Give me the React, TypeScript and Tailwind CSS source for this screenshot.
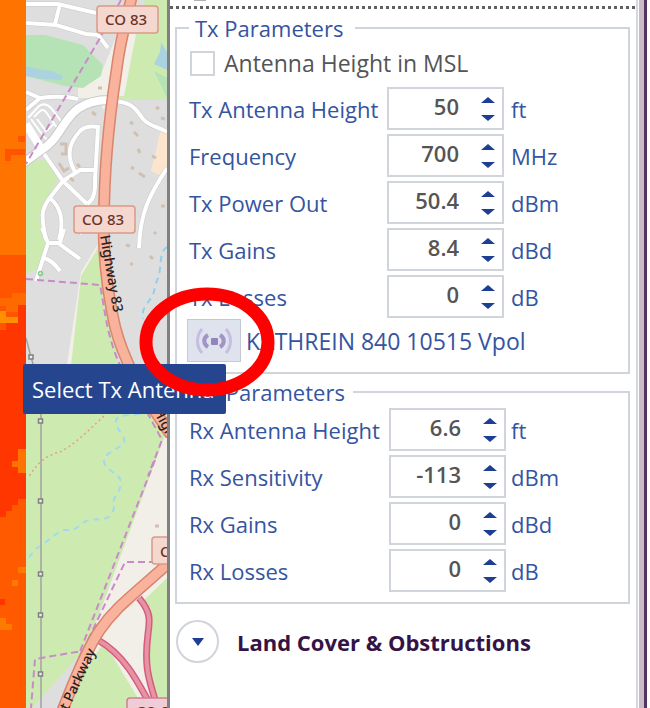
import React from 'react';
import clsx from 'clsx';

type Param = { id: string; label: string; value: string; unit: string };

const txParams: Param[] = [
  { id: 'tx-height', label: 'Tx Antenna Height', value: '50', unit: 'ft' },
  { id: 'tx-frequency', label: 'Frequency', value: '700', unit: 'MHz' },
  { id: 'tx-power', label: 'Tx Power Out', value: '50.4', unit: 'dBm' },
  { id: 'tx-gains', label: 'Tx Gains', value: '8.4', unit: 'dBd' },
  { id: 'tx-losses', label: 'Tx Losses', value: '0', unit: 'dB' },
];

const rxParams: Param[] = [
  { id: 'rx-height', label: 'Rx Antenna Height', value: '6.6', unit: 'ft' },
  { id: 'rx-sensitivity', label: 'Rx Sensitivity', value: '-113', unit: 'dBm' },
  { id: 'rx-gains', label: 'Rx Gains', value: '0', unit: 'dBd' },
  { id: 'rx-losses', label: 'Rx Losses', value: '0', unit: 'dB' },
];

function ParamRow({ id, label, value, unit, wide }: Param & { wide?: boolean }) {
  return (
    <div className="flex h-[43px] items-center">
      <label htmlFor={id} className={clsx('shrink-0 whitespace-nowrap', wide ? 'w-[200px]' : 'w-[198px]')}>
        {label}
      </label>
      <div className="flex h-full w-[117px] shrink-0 items-center border-2 border-[#d0d4db] bg-white">
        <input
          id={id}
          type="text"
          inputMode="decimal"
          defaultValue={value}
          className="h-full w-[70px] bg-transparent pb-[6px] text-right font-semibold text-[#555] outline-none"
        />
        <div className="ml-[22px] flex flex-col gap-3">
          <button type="button" aria-label={`Increase ${label}`} className="block">
            <svg className="block h-[6px] w-[14px]" viewBox="0 0 14 6"><path d="M7 0 14 6H0z" fill="#1c3f94" /></svg>
          </button>
          <button type="button" aria-label={`Decrease ${label}`} className="block">
            <svg className="block h-[6px] w-[14px]" viewBox="0 0 14 6"><path d="M0 0H14L7 6z" fill="#1c3f94" /></svg>
          </button>
        </div>
      </div>
      <span className={wide ? 'ml-[5px]' : 'ml-[7px]'}>{unit}</span>
    </div>
  );
}

function AntennaIcon() {
  return (
    <svg className="h-[26px] w-9" viewBox="0 0 36 26" fill="none">
      <rect x="15" y="10" width="7" height="7" rx="1" fill="#9583bd" />
      <path d="M12 7C7 10 7 16 12 19M24 7c5 3 5 9 0 12" stroke="#a294c6" strokeWidth="4" />
      <path d="M6 1C0 8 0 18 6 25M30 1c6 7 6 17 0 24" stroke="#c9bce2" strokeWidth="3" />
    </svg>
  );
}

function MapView() {
  return (
    <svg
      className="h-full w-[167px] shrink-0"
      viewBox="0 0 167 708"
      preserveAspectRatio="xMinYMin slice"
      role="img"
      aria-label="Coverage map"
      fill="none"
      fontFamily="'Noto Sans', 'Open Sans', sans-serif"
    >
      <rect width="167" height="708" fill="#dedede" />

      {/* land use */}
      <path d="M145 0h22v100h-48l7-30z" fill="#cdebb0" />
      <path d="M119 30l17 4-12 62h-16l-4 14-8-12H78V88l22-12z" fill="#f2efe9" />
      <path d="M26 35l19 0 38 10 20 20-2 11-18 12-18-2-39-10z" fill="#b5e3b5" />
      <path d="M26 66l12 3 14 2 11 5-2 4-18-1-17-3z" fill="#aad3df" />
      <path d="M161 42l6 10v18l-13-6 6-12z" fill="#aad3df" />
      <path d="M154 71l13 7v20z" fill="#b5e3b5" />
      <path d="M26 163l20-4 12 21-16 26 6 34-12 30-10 4z" fill="#cdebb0" />
      <path d="M167 128l-7 4-4 19-5 20 8 4 8-9z" fill="#fbe6cd" />
      <path d="M98 244L71 364h-4l14-92z" fill="#f2efe9" />
      <path d="M98 248l9 60 12 58H71l10-90z" fill="#cdebb0" />
      <path d="M26 400h117l24 40-83 210-52 58h-6z" fill="#cdebb0" />
      <path d="M167 430v278H58l28-58z" fill="#f2efe9" />
      <path d="M60 708l44-66 40 66z" fill="#cdebb0" />
      <path d="M167 578l-26 25 7 20-2 40 12 45h9z" fill="#cdebb0" />

      {/* residential streets */}
      <g stroke="#c8c8c8" strokeWidth="5">
        <path d="M26 4l32 0 38 9M60 4l-5 20M26 23l30 2 30 9 12 1 10 13" />
        <path d="M26 92l14 6-14 12M40 98q22-3 38 1" />
        <path d="M110 101c22 0 26 8 33 18 6 7 15 8 24 13" />
        <path d="M42 151l21 30-14 18c-8 11-8 18-3 41M63 181l24 23M63 181l17-11 14 0M87 204q9-5 8-24l3-53q-12-2-18 4c-14 15-12 28-5 41M50 198c12 10 14 24 9 42" />
        <path d="M167 168c-17 26-27 44-28 80" />
        <path d="M42 228l6 15 10 0 22 16M60 243l4-14M48 243l-12 38M44 258q8 2 16 13M82 234l-6-10" />
      </g>
      <g stroke="#fff" strokeWidth="4">
        <path d="M26 4l32 0 38 9M60 4l-5 20M26 23l30 2 30 9 12 1 10 13" />
        <path d="M26 92l14 6-14 12M40 98q22-3 38 1" />
        <path d="M110 101c22 0 26 8 33 18 6 7 15 8 24 13" />
        <path d="M42 151l21 30-14 18c-8 11-8 18-3 41M63 181l24 23M63 181l17-11 14 0M87 204q9-5 8-24l3-53q-12-2-18 4c-14 15-12 28-5 41M50 198c12 10 14 24 9 42" />
        <path d="M167 168c-17 26-27 44-28 80" />
        <path d="M42 228l6 15 10 0 22 16M60 243l4-14M48 243l-12 38M44 258q8 2 16 13M82 234l-6-10" />
      </g>
      <path d="M28 118l11-12q6-4 12 2l13 17M31 119l13 18q4 5 9 1l7-6-14-20q-3-4-7 0l-5 5M37 119l9 12 8-7" stroke="#fff" strokeWidth="2" />
      <path d="M22 164l18-13c28-16 22-51 70-51" stroke="#c8c8c8" strokeWidth="10" />
      <path d="M22 164l18-13c28-16 22-51 70-51M26 124l16 26" stroke="#fff" strokeWidth="8" />

      {/* buildings */}
      <g stroke="#cfc0b2" strokeWidth="3">
        <path d="M60 144h6v10h-5M59 163l5 8 5-3M70 178l4 3M77 164l3 3M92 112l4 3M98 88h4M130 122l3 2M134 132l4 4M138 149l2 4M131 167l3 2M139 173l6 4M152 156l4 2M156 107l3 2M161 118l4 1M161 206h4M154 232l2 2M126 245l4 1M150 256l3 3M130 264h3M155 526h4" />
      </g>

      {/* streams */}
      <path d="M167 247c-10 6-3 22-12 38 0 12-8 16-12 26v8" stroke="#8fd0ea" strokeWidth="2" strokeDasharray="6 5" />
      <path d="M140 414c-14 2-24 0-24 8s10 14 8 20-20 10-20 19 16 12 17 21-11 16-7 26c-4 18-22 7-31 15s-11 7-20 7c-12 6-17 14-26 18-5 5-8 10-11 12" stroke="#a3d8f0" strokeWidth="2" strokeDasharray="6 5" />

      {/* power line */}
      <path d="M26 338l5 19 10 34v317" stroke="#a2a2a2" strokeWidth="1.500" />
      <g fill="#eee" stroke="#808080" strokeWidth="1.500">
        <path d="M29 355h4v4h-4zM38.500 419h4v4h-4zM38.500 499h4v4h-4zM38.500 572h4v4h-4zM38.500 613h4v4h-4zM38.500 672h4v4h-4z" />
      </g>
      <circle cx="40.500" cy="273.500" r="2" stroke="#7fcf8a" strokeWidth="1.500" />
      <path d="M104 416c-16 15-30 29-44 36-16 4-23 12-32 26" stroke="#ee9c80" strokeWidth="1.500" strokeDasharray="2 3" />

      {/* boundaries */}
      <g stroke="#c98bc8" strokeWidth="2" strokeDasharray="7 4">
        <path d="M121 0l-21 38-74 126" />
        <path d="M26 279l74 6c4 18 6 50 20 80M147 412l15 28-14 36M155 460L79 654M167 562h-42L88 640" />
        <path d="M58 708l24-57-47 8-4 49" />
      </g>

      {/* slip roads */}
      <g stroke="#d35d80" strokeWidth="7">
        <path d="M139 598c12 14 11 22 9 36-5 40 4 50 9 74M98 640c25 14 38 38 54 68" />
      </g>
      <g stroke="#e892a2" strokeWidth="4">
        <path d="M139 598c12 14 11 22 9 36-5 40 4 50 9 74M98 640c25 14 38 38 54 68" />
      </g>

      {/* highway */}
      <g stroke="#d9846c" strokeWidth="12">
        <path d="M132-4c-6 24-12 44-16 78-7 46-12 90-12 146-1 30 2 62 9 97 5 28 14 42 20 58 10 20 22 36 38 60" />
        <path d="M172 560c-66 60-72 52-110 152" />
      </g>
      <g stroke="#f9b29c" strokeWidth="9">
        <path d="M132-4c-6 24-12 44-16 78-7 46-12 90-12 146-1 30 2 62 9 97 5 28 14 42 20 58 10 20 22 36 38 60" />
        <path d="M172 560c-66 60-72 52-110 152" />
      </g>
      <g fill="#222" fontSize="14" fontWeight="500">
        <text transform="translate(100 236) rotate(80)">Highway 83</text>
        <text transform="translate(153 411) rotate(62)">High</text>
        <text transform="translate(68 711) rotate(-65)">t Parkway</text>
      </g>

      {/* route shields */}
      <g fill="#f4d7cf" stroke="#d99a86" strokeWidth="1.500">
        <rect x="97" y="6" width="61" height="27" rx="3" />
        <rect x="74" y="206" width="61" height="27" rx="3" />
        <rect x="152" y="537" width="40" height="27" rx="3" />
      </g>
      <rect x="127" y="698" width="60" height="27" rx="3" fill="#f0ccd6" stroke="#cf7f96" strokeWidth="1.500" />
      <g fill="#6b3427" fontSize="15" fontWeight="500">
        <text x="105" y="25">CO 83</text>
        <text x="82" y="225">CO 83</text>
        <text x="160" y="557">CO 83</text>
        <text x="136" y="717">CO 83</text>
      </g>

      {/* coverage heat strip */}
      <path d="M0 0h26v708H0z" fill="#ff7300" />
      <path d="M18 136h7v6h-7zM5 149h20v6H11v6H5zM0 255h26v110H0z" fill="#ff5500" />
      <path d="M0 330h6v-6h12v-12h8v193h-8v6h-6v6H0z" fill="#ff3600" />
      <path d="M0 329h26v-24h-8v12H6v12z" fill="#ff3600" />
      <path d="M12 293h14v12h-8v7H6v-6H0v-8h12z" fill="#ff6a00" />
      <path d="M0 311h6v6h12v6H0z" fill="#ff9000" />
      <path d="M0 517h6v-6h6v-6h6v-6h8v209H0z" fill="#ff5a00" />
      <path d="M18 449h8v24h-8v-6h-6v-6h6z" fill="#ff7300" />
      <path d="M18 567h8v6h-8zM12 580h6v6h-6zM0 618h6v6h6v6H0z" fill="#ff7a00" />
      <path d="M0 599h5v6H0z" fill="#ff3600" />
    </svg>
  );
}

export default function App() {
  return (
    <div className="flex h-screen overflow-hidden bg-white font-['Open_Sans','Noto_Sans',sans-serif] text-[22px] leading-8 text-[#3554a0]">
      <MapView />

      <main className="flex min-w-0 flex-1 flex-col border-l-[3px] border-[#808080] pr-[6px] pl-[5px]">
        {/* bottom edge of the focused section above */}
        <div className="-mr-[6px] -ml-[5px] flex h-[9px] shrink-0 flex-col justify-between">
          <div className="ml-6 h-px w-3 bg-[#b0b0b0]" />
          <div className="h-[3px] bg-[repeating-linear-gradient(90deg,#606060_0_3px,transparent_3px_6px)]" />
        </div>

        <fieldset className="mt-[3px] min-w-0 border-2 border-[#d0d4db] pr-3 pb-[10px] pl-3">
          <legend className="pr-3 pl-[6px]">Tx Parameters</legend>
          <div className="mt-[3px] mb-2 flex items-center gap-[9px] text-[23px] text-[#555]">
            <input id="msl" type="checkbox" className="ml-px size-[25px] shrink-0 appearance-none border-2 border-[#d0d4db] bg-white checked:bg-[#3554a0]" />
            <label htmlFor="msl">Antenna Height in MSL</label>
          </div>
          <div className="flex flex-col gap-1">
            {txParams.map((p) => (
              <ParamRow key={p.id} {...p} />
            ))}
          </div>
          <div className="relative mt-px -ml-[2px] flex items-center gap-[5px]">
            <button
              type="button"
              aria-label="Select Tx Antenna"
              aria-describedby="antenna-tip"
              className="flex h-[43px] w-[54px] shrink-0 items-center justify-center border border-[#c3c9d6] bg-[#dfe3ee]"
            >
              <AntennaIcon />
            </button>
            <span className="text-[23px] whitespace-nowrap">KATHREIN 840 10515 Vpol</span>

            <div
              id="antenna-tip"
              role="tooltip"
              className="absolute top-[45px] -left-[164px] z-10 flex h-[50px] w-[203px] items-center rounded-xs bg-[#25468f] pl-[9px] whitespace-nowrap text-white"
            >
              Select Tx Antenna
            </div>
            <svg className="pointer-events-none absolute -top-8 -left-12 z-20 h-[110px] w-[136px]" viewBox="0 0 136 110">
              <ellipse cx="68" cy="55" rx="61" ry="48" fill="none" stroke="#ff0000" strokeWidth="13" />
            </svg>
          </div>
        </fieldset>

        <fieldset className="mt-[2px] min-w-0 border-2 border-[#d0d4db] pr-3 pb-[10px] pl-3">
          <legend className="pr-2 pl-[6px]">Rx Parameters</legend>
          <div className="flex flex-col gap-1">
            {rxParams.map((p) => (
              <ParamRow key={p.id} {...p} wide />
            ))}
          </div>
        </fieldset>

        <div className="mt-4 ml-px flex items-center gap-[18px]">
          <button
            type="button"
            aria-label="Expand Land Cover & Obstructions"
            className="flex size-[43px] shrink-0 items-center justify-center rounded-full border-2 border-[#d0d4db]"
          >
            <svg className="h-2 w-3" viewBox="0 0 12 8"><path d="M0 0H12L6 8z" fill="#1c3f94" /></svg>
          </button>
          <h2 className="font-bold whitespace-nowrap text-[#351445]">Land Cover &amp; Obstructions</h2>
        </div>
      </main>

      {/* window frame */}
      <div className="mr-[3px] flex w-[11px] shrink-0 border-l-2 border-[#d5d8de] pl-px">
        <div className="w-[5px] bg-[#c8bccb]" />
        <div className="w-[3px] bg-[#553560]" />
      </div>
    </div>
  );
}
